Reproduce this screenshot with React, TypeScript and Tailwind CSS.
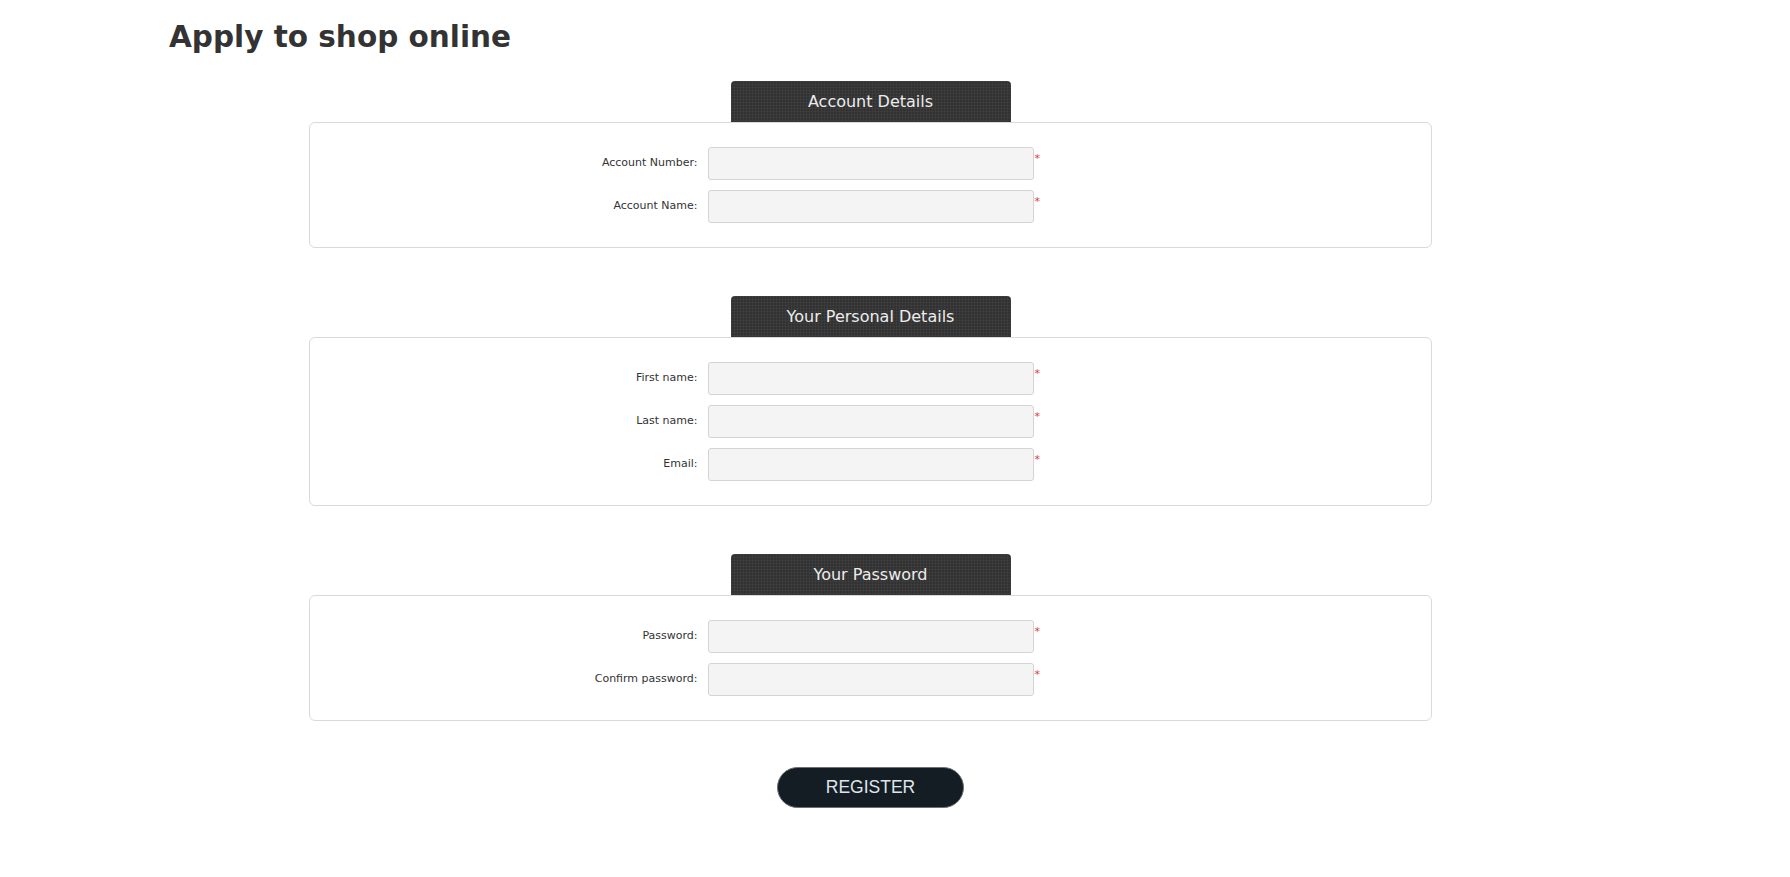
import React from 'react';

// ─── Form structure ───────────────────────────────────────────────────────────

interface Field {
    label: string;
    type: string;
}

interface Section {
    title: string;
    fields: Field[];
}

const SECTIONS: Section[] = [
    {
        title: 'Account Details',
        fields: [
            { label: 'Account Number:', type: 'text' },
            { label: 'Account Name:', type: 'text' },
        ],
    },
    {
        title: 'Your Personal Details',
        fields: [
            { label: 'First name:', type: 'text' },
            { label: 'Last name:', type: 'text' },
            { label: 'Email:', type: 'email' },
        ],
    },
    {
        title: 'Your Password',
        fields: [
            { label: 'Password:', type: 'password' },
            { label: 'Confirm password:', type: 'password' },
        ],
    },
];

// ─── Pieces ───────────────────────────────────────────────────────────────────

const FormRow: React.FC<{ field: Field }> = ({ field }) => (
    <div className="grid grid-cols-[1fr_326px_1fr] items-center">
        <label className="pr-[10px] text-right text-[11px] text-[#333]">{field.label}</label>
        <input
            type={field.type}
            className="h-[33px] w-[326px] rounded-[3px] border border-[#d4d4d4] bg-[#f4f4f4] px-2 outline-none"
        />
        <span className="self-start pl-[1px] pt-[6px] text-[11px] leading-none text-[#e0383e]">*</span>
    </div>
);

const FormSection: React.FC<{ section: Section }> = ({ section }) => (
    <div className="flex flex-col items-center">
        {/* Tab */}
        <div className="flex h-[41px] w-[280px] items-center justify-center rounded-t-[4px] bg-[#323232] bg-[image:linear-gradient(rgba(255,255,255,0.035)_1px,transparent_1px),linear-gradient(90deg,rgba(255,255,255,0.035)_1px,transparent_1px)] bg-[size:3px_3px] text-[16px] text-[#ececec]">
            {section.title}
        </div>

        {/* Panel */}
        <div className="flex w-[1123px] flex-col gap-[10px] rounded-[6px] border border-[#dadada] pb-[24px] pt-[24px]">
            {section.fields.map((f) => (
                <FormRow key={f.label} field={f} />
            ))}
        </div>
    </div>
);

// ─── Page ─────────────────────────────────────────────────────────────────────

const App: React.FC = () => {
    return (
        <div className="min-h-screen bg-white font-['DejaVu_Sans',Verdana,sans-serif]">
            <div className="ml-[169px] w-[1403px] pt-[20px]">
                <h1 className="text-[29.5px] font-bold leading-[35px] text-[#333]">Apply to shop online</h1>

                <div className="mt-[26px] flex flex-col gap-[48px]">
                    {SECTIONS.map((s) => (
                        <FormSection key={s.title} section={s} />
                    ))}
                </div>

                <div className="mt-[46px] flex justify-center">
                    <button className="h-[41px] w-[187px] rounded-full border border-[#6b7175] bg-[#141d23] font-['Liberation_Sans',Arial,sans-serif] text-[17.5px] text-[#dfe6eb]">
                        REGISTER
                    </button>
                </div>
            </div>
        </div>
    );
};

export default App;
